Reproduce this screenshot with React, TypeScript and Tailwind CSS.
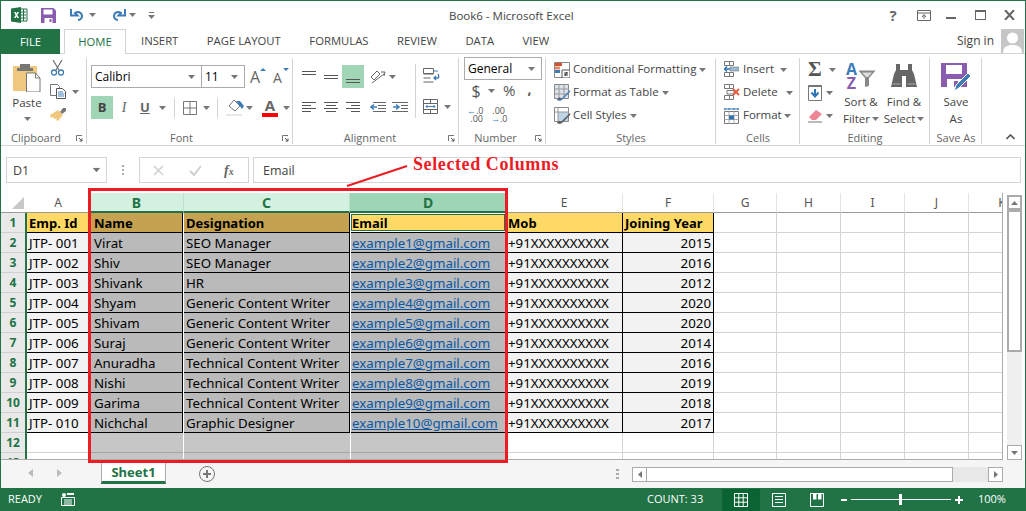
import React from "react";

const Caret = ({ className = "" }: { className?: string }) => (
  <svg width="7" height="4" viewBox="0 0 7 4" className={`shrink-0 ${className}`}><path d="M0 0h7L3.500 4z" fill="#777" /></svg>
);

const ExcelLogo = () => (
  <svg width="17" height="16" viewBox="0 0 17 16">
    <path d="M9 2h7v12H9z" fill="#fff" stroke="#217346" />
    <path d="M10 5h5M10 8h5M10 11h5M12.500 2v12" stroke="#217346" />
    <path d="M0 1.500 10 0v16L0 14.500z" fill="#217346" />
    <path d="M3 5h1.800L5.400 6.800 6.200 5H8L6.300 8 8 11H6.200L5.400 9.200 4.600 11H3L4.600 8z" fill="#fff" />
  </svg>
);
const SaveIcon = ({ s = 15 }: { s?: number }) => (
  <svg width={s} height={s} viewBox="0 0 15 15">
    <path d="M0 0h12.500L15 2.500V15H0z" fill="#8a5cb0" />
    <path d="M2.500 1.500h9v5h-9z" fill="#fff" />
    <path d="M3.500 10h8v5h-8z" fill="#fff" />
    <path d="M8.500 11h2v3h-2z" fill="#8a5cb0" />
  </svg>
);
const Undo = ({ flip = false }: { flip?: boolean }) => (
  <svg width="16" height="13" viewBox="0 0 16 13" style={flip ? { transform: "scaleX(-1)" } : undefined}>
    <path d="M1 0v6.500h6.500L5 4c2.500-2 6.500-.8 7 2.500.3 2.500-1.500 4.300-4 4.500" fill="none" stroke="#3e7cb8" strokeWidth="2" />
  </svg>
);
const Lines = ({ kind }: { kind: "top" | "mid" | "bot" | "left" | "center" | "right" }) => {
  const d: Record<string, string> = {
    top: "M0 .5h14M0 3.500h14",
    mid: "M0 4.500h14M0 7.500h14",
    bot: "M0 8.500h14M0 11.500h14",
    left: "M0 .5h14M0 3.500h9M0 6.500h14M0 9.500h9",
    center: "M0 .5h14M2 3.500h10M0 6.500h14M2 9.500h10",
    right: "M0 .5h14M5 3.500h9M0 6.500h14M5 9.500h9",
  };
  return <svg width="14" height="12" viewBox="0 0 14 12"><path d={d[kind]} stroke="#555" fill="none" /></svg>;
};
const Launcher = () => (
  <svg width="7" height="7" viewBox="0 0 7 7" className="shrink-0"><path d="M.5 6V.5H6" stroke="#777" fill="none" /><path d="M3 3l3 3M6 3.500V6H3.500" stroke="#555" fill="none" /></svg>
);

const Group = ({ w, label, launcher, children, labelClass = "" }: { w: string; label: string; launcher?: boolean; children: React.ReactNode; labelClass?: string }) => (
  <div className={`${w} shrink-0 flex flex-col relative`}>
    <div className="h-[74px] flex shrink-0">{children}</div>
    <div className="flex items-center h-[14px] text-[11px] text-[#666] leading-none">
      <span className={`flex-1 text-center pb-[2px] ${labelClass}`}>{label}</span>
      {launcher && <span className="mr-[4px] flex"><Launcher /></span>}
    </div>
    <div className="absolute right-0 top-0 bottom-0 w-px bg-[#d4d4d4]" />
  </div>
);

const Row3 = ({ icon, text, caretGap = "ml-[3px]" }: { icon: React.ReactNode; text: string; caretGap?: string }) => (
  <div className="h-[23px] flex items-center">
    <span className="w-[19px] flex">{icon}</span>
    <span className="text-[11.500px] text-[#444] whitespace-nowrap pb-[2px]">{text}</span>
    <Caret className={caretGap} />
  </div>
);

const CondIcon = () => (
  <svg width="16" height="16" viewBox="0 0 16 16">
    <path d="M.5.500h15v15H.5z" fill="#fff" stroke="#888" />
    <path d="M1 1h7v3H1z" fill="#d2542f" /><path d="M1 4.500h5v3H1z" fill="#e58a6a" /><path d="M1 8h5v3H1z" fill="#3e7cb8" />
    <path d="M8 8h8v8H8z" fill="#fff" stroke="#555" />
    <path d="M10 11h4M10 13h4M13 10l-2 4" stroke="#333" fill="none" />
  </svg>
);
const TableIcon = () => (
  <svg width="17" height="17" viewBox="0 0 17 17">
    <path d="M.5.500h14v14H.5z" fill="#dde3ec" stroke="#888" />
    <path d="M5 .5v14M10 .5v14M.5 5h14M.5 10h14" stroke="#999" />
    <path d="M3 16c1-2 3-2 4-1l8-8c1-1 2 0 1 1l-8 8c-1 1-4 1-5 0z" fill="#4d7fb5" />
    <path d="M3 16l3-3 1 2z" fill="#555" />
  </svg>
);
const StyleIcon = () => (
  <svg width="17" height="17" viewBox="0 0 17 17">
    <path d="M.5.500h14v14H.5z" fill="#fff" stroke="#888" />
    <path d="M4 5h10v9H4z" fill="#bfd3e6" />
    <path d="M4 .5v14M.5 5h14" stroke="#999" />
    <path d="M3 16c1-2 3-2 4-1l8-8c1-1 2 0 1 1l-8 8c-1 1-4 1-5 0z" fill="#555" />
  </svg>
);
const CellIns = () => (
  <svg width="15" height="17" viewBox="0 0 15 17"><path d="M.5.500h5v4h-5zM5.500.5h4v4h-4zM.5 11.500h5v4h-5zM5.500 11.500h4v4h-4z" fill="#fff" stroke="#777" /><path d="M6 6h9v4H6z" fill="#9db8d4" stroke="#777" strokeWidth=".6" /><path d="M0 8h6M3 5.500 .5 8 3 10.500" stroke="#2e75b6" strokeWidth="1.500" fill="none" /></svg>
);
const CellDel = () => (
  <svg width="16" height="17" viewBox="0 0 16 17"><path d="M.5.500h5v4h-5zM5.500.5h4v4h-4zM.5 11.500h5v4h-5zM5.500 11.500h4v4h-4zM3 6.500h7v3.500H3z" fill="#fff" stroke="#777" /><path d="M9 5l6 6M15 5l-6 6" stroke="#e0593a" strokeWidth="1.800" /></svg>
);
const CellFmt = () => (
  <svg width="15" height="16" viewBox="0 0 15 16"><path d="M.5 3.500h14v12H.5z" fill="#fff" stroke="#777" /><path d="M.5 7.500h14M.5 11.500h14M5 3.500v12M10 3.500v12" stroke="#aaa" /><path d="M5 7.500h5v4H5z" fill="#2e75b6" /><path d="M0 1h15" stroke="#2e75b6" /><path d="M1 0v2M14 0v2M5 0v2M10 0v2" stroke="#2e75b6" /></svg>
);

const TitleBar = () => (
  <div className="h-[28px] flex items-center relative shrink-0">
    <span className="ml-[10px] flex"><ExcelLogo /></span>
    <span className="ml-[13px] flex"><SaveIcon /></span>
    <span className="ml-[14px] flex"><Undo /></span>
    <Caret className="ml-[3px]" />
    <span className="ml-[14px] flex"><Undo flip /></span>
    <Caret className="ml-[3px]" />
    <span className="ml-[12px] flex flex-col gap-[2px] items-center">
      <span className="w-[5px] h-px bg-[#777]" />
      <Caret />
    </span>
    <span className="absolute left-[448px] top-[7px] text-[11.500px] leading-[16px] text-[#444] whitespace-nowrap">Book6 - Microsoft Excel</span>
    <div className="ml-auto flex items-center text-[#666]">
      <span className="text-[15px] font-bold w-[12px] text-center leading-none">?</span>
      <span className="ml-[18px] flex">
        <svg width="14" height="11" viewBox="0 0 14 11"><path d="M.5.500h13v10H.5zM.5 3h13" stroke="#666" fill="none" /><path d="M7 9V5M5 7l2-2.500L9 7" stroke="#666" fill="none" /></svg>
      </span>
      <span className="ml-[15px] w-[10px] h-[2px] bg-[#666] mt-[5px]" />
      <span className="ml-[19px] w-[11px] h-[10px] border border-[#666] border-t-[2px]" />
      <span className="ml-[18px] mr-[10px] flex">
        <svg width="11" height="10" viewBox="0 0 11 10"><path d="M1 0l9 10M10 0 1 10" stroke="#666" strokeWidth="2" /></svg>
      </span>
    </div>
  </div>
);

const Tabs = () => (
  <div className="h-[25px] flex relative shrink-0 border-b border-[#d4d4d4] text-[11.300px] text-[#444] leading-none">
    <div className="w-[59px] h-[25px] bg-[#217346] text-white flex items-center justify-center">FILE</div>
    <div className="ml-[4px] w-[62px] h-[25px] bg-white border-x border-t border-[#d4d4d4] text-[#217346] flex items-center justify-center">HOME</div>
    <div className="ml-[15px] flex items-center h-[24px] gap-[28.500px] whitespace-nowrap">
      <span>INSERT</span><span>PAGE LAYOUT</span><span>FORMULAS</span><span>REVIEW</span><span>DATA</span><span>VIEW</span>
    </div>
    <div className="ml-auto flex items-center h-[24px]">
      <span className="text-[12px]">Sign in</span>
      <div className="ml-[7px] mr-[1px] w-[23px] h-[24px] bg-[#c6c6c6] overflow-hidden flex">
        <svg width="23" height="24" viewBox="0 0 23 24"><circle cx="11.500" cy="9" r="5.500" fill="#fff" /><path d="M2 24c0-6 4-8 9.500-8S21 18 21 24z" fill="#fff" /></svg>
      </div>
    </div>
  </div>
);

const Ribbon = () => (
  <div className="h-[92px] flex shrink-0 pt-[4px] pb-[1px] border-b border-[#d4d4d4] relative">
    <Group w="w-[86px]" label="Clipboard" launcher labelClass="pr-[5px]">
      <div className="ml-[7px] w-[38px] flex flex-col items-center">
        <span className="mt-[4px] flex">
          <svg width="30" height="30" viewBox="0 0 30 30">
            <path d="M1 4h24v25H1z" fill="#efc87e" />
            <path d="M8 2h10v4h3v3H5V6h3z" fill="#777" />
            <path d="M14.500 11h9l4.500 5v14H14.500z" fill="#fff" stroke="#777" />
            <path d="M23.500 11v5H28" fill="none" stroke="#777" />
          </svg>
        </span>
        <span className="mt-[3px] text-[11.500px] text-[#444] leading-[16px]">Paste</span>
        <Caret className="mt-[6px]" />
      </div>
      <div className="ml-[4px] flex flex-col">
        <span className="mt-[2px] flex">
          <svg width="15" height="16" viewBox="0 0 15 16"><path d="M3 0l6 10M12 0 6 10" stroke="#777" strokeWidth="1.300" fill="none" /><circle cx="4" cy="12.500" r="2.500" fill="none" stroke="#3e7cb8" strokeWidth="1.300" /><circle cx="11" cy="12.500" r="2.500" fill="none" stroke="#3e7cb8" strokeWidth="1.300" /></svg>
        </span>
        <span className="mt-[8px] flex items-center">
          <svg width="16" height="15" viewBox="0 0 16 15"><path d="M.5.500h7l2 2v9h-9z" fill="#fff" stroke="#777" /><path d="M6.500 4.500h6l3 3v7h-9z" fill="#fff" stroke="#555" /><path d="M8 8h5M8 10h6M8 12h6" stroke="#3e7cb8" /></svg>
          <Caret className="ml-[6px]" />
        </span>
        <span className="mt-[8px] flex">
          <svg width="17" height="15" viewBox="0 0 17 15"><path d="M10 5l3-4h3v3l-4 3z" fill="#777" /><path d="M0 8l8-5 5 5-5 6-2-1 1-2-3 1-1-2-2 1z" fill="#efc87e" /></svg>
        </span>
      </div>
    </Group>
    <Group w="w-[206px]" label="Font" launcher labelClass="pr-[6px]">
      <div className="ml-[4px] flex flex-col">
        <div className="mt-[7px] flex items-center">
          <div className="w-[111px] h-[23px] border border-[#ababab] flex items-center pl-[3px] pr-[6px] text-[12px] text-black">
            <span className="flex-1">Calibri</span><Caret />
          </div>
          <div className="w-[43px] h-[23px] border border-[#ababab] border-l-0 flex items-center pl-[3px] pr-[6px] text-[12px] text-black">
            <span className="flex-1">11</span><Caret />
          </div>
          <span className="ml-[5px] relative flex w-[16px] items-end">
            <span className="text-[16px] leading-none text-[#666]">A</span>
            <svg width="6" height="3" viewBox="0 0 6 3" className="absolute right-0 top-[-1px]"><path d="M0 3h6L3 0z" fill="#3e7cb8" /></svg>
          </span>
          <span className="ml-[7px] relative flex w-[16px] items-end">
            <span className="text-[14px] leading-none text-[#666] mt-[2px]">A</span>
            <svg width="6" height="3" viewBox="0 0 6 3" className="absolute right-0 top-[-1px]"><path d="M0 0h6L3 3z" fill="#3e7cb8" /></svg>
          </span>
        </div>
        <div className="mt-[8px] flex items-center h-[23px] text-[#666]">
          <span className="w-[22px] h-[23px] bg-[#a0d5b5] flex items-center justify-center text-[13px] font-bold text-[#444]">B</span>
          <span className="ml-[3px] w-[16px] text-center text-[14px] italic font-['Liberation_Serif',serif]">I</span>
          <span className="ml-[8px] text-[13px] font-bold underline leading-none w-[10px]">U</span>
          <Caret className="ml-[9px]" />
          <span className="ml-[8px] w-px h-[20px] bg-[#d4d4d4]" />
          <span className="ml-[8px] flex">
            <svg width="14" height="14" viewBox="0 0 14 14"><path d="M.5.500h13v13H.5zM7 .5v13M.5 7h13" stroke="#777" fill="none" /></svg>
          </span>
          <Caret className="ml-[6px]" />
          <span className="ml-[7px] w-px h-[20px] bg-[#d4d4d4]" />
          <span className="ml-[8px] flex flex-col">
            <svg width="18" height="17" viewBox="0 0 18 17"><path d="M3 7l5-6 6 6-5 5z" fill="#fff" stroke="#777" /><path d="M10 2h4l4 5-2 3-3-4z" fill="#3e7cb8" /><path d="M0 15h16v2H0z" fill="#e8e8e8" /></svg>
          </span>
          <Caret className="ml-[2px]" />
          <span className="ml-[9px] flex flex-col items-center w-[16px]">
            <span className="text-[15px] leading-[12px] font-bold text-[#666]">A</span>
            <span className="mt-[2px] w-[16px] h-[4px] bg-[#f00]" />
          </span>
          <Caret className="ml-[5px]" />
        </div>
      </div>
    </Group>
    <Group w="w-[166px]" label="Alignment" launcher labelClass="pr-[1px]">
      <div className="ml-[9px] flex flex-col">
        <div className="mt-[7px] h-[23px] flex items-center">
          <span className="w-[22px] flex"><Lines kind="top" /></span>
          <span className="w-[18px] flex"><Lines kind="mid" /></span>
          <span className="w-[22px] h-[23px] bg-[#a0d5b5] flex items-center justify-center"><Lines kind="bot" /></span>
          <span className="ml-[6px] flex">
            <svg width="16" height="15" viewBox="0 0 16 15"><path d="M1 8l6-6 3 3-6 6z" fill="none" stroke="#666" /><path d="M2 14 14 5" stroke="#666" /><path d="M11 3l4 0-1 4" stroke="#666" fill="none" /></svg>
          </span>
          <Caret className="ml-[3px]" />
        </div>
        <div className="mt-[8px] h-[23px] flex items-center">
          <span className="w-[22px] flex"><Lines kind="left" /></span>
          <span className="w-[22px] flex"><Lines kind="center" /></span>
          <span className="w-[24px] flex"><Lines kind="right" /></span>
          <span className="w-[22px] flex">
            <svg width="16" height="12" viewBox="0 0 16 12"><path d="M3 .5h13M8 3.500h8M8 6.500h8M3 9.500h13" stroke="#666" /><path d="M7 5H1M4 2.500 1 5l3 2.500" stroke="#3e7cb8" strokeWidth="1.500" fill="none" /></svg>
          </span>
          <span className="flex">
            <svg width="16" height="12" viewBox="0 0 16 12"><path d="M0 .5h16M9 3.500h7M9 6.500h7M0 9.500h16" stroke="#666" /><path d="M1 5h6M4 2.500 7 5 4 7.500" stroke="#3e7cb8" strokeWidth="1.500" fill="none" /></svg>
          </span>
        </div>
      </div>
      <span className="ml-[7px] w-px h-[54px] mt-[6px] bg-[#d4d4d4]" />
      <div className="ml-[7px] flex flex-col">
        <span className="mt-[10px] flex">
          <svg width="17" height="16" viewBox="0 0 17 16"><path d="M.5.500h10v5H.5zM.5 6h10M.5 10h7M.5 14h10" stroke="#666" fill="none" /><path d="M10 3h5" stroke="#3e7cb8" /><path d="M11 10h4c1 0 1-2 0-4M13 8l-2 2 2 2" stroke="#3e7cb8" strokeWidth="1.300" fill="none" /></svg>
        </span>
        <span className="mt-[15px] flex items-center">
          <svg width="15" height="15" viewBox="0 0 15 15"><path d="M.5.500h14v14H.5zM.5 4.500h14M.5 10.500h14M7.500.5v4M7.500 10.500v4" stroke="#666" fill="none" /><path d="M3 7.500h9M4.500 6 3 7.500 4.500 9M10.500 6 12 7.500 10.500 9" stroke="#3e7cb8" fill="none" /></svg>
          <Caret className="ml-[6px]" />
        </span>
      </div>
    </Group>
    <Group w="w-[87px]" label="Number" launcher labelClass="pr-[3px]">
      <div className="ml-[5px] flex flex-col text-[#555]">
        <div className="mt-[-1px] w-[78px] h-[23px] border border-[#ababab] flex items-center pl-[3px] pr-[6px] text-[12px] text-black">
          <span className="flex-1">General</span><Caret />
        </div>
        <div className="mt-[1px] h-[19px] flex items-center text-[16px]">
          <span className="ml-[7px] w-[10px] text-center">$</span>
          <Caret className="ml-[7px]" />
          <span className="ml-[8px] text-[15px]">%</span>
          <span className="ml-[12px] text-[14px] font-bold leading-none mb-[4px]">,</span>
        </div>
        <div className="mt-[7px] flex items-center">
          <span className="ml-[3px] flex flex-col text-[9px] leading-[8px] w-[16px] text-right">
            <span><span className="text-[#3e7cb8]">←</span>.0</span><span>.00</span>
          </span>
          <span className="ml-[8px] flex flex-col text-[9px] leading-[8px] w-[14px] text-right">
            <span>.00</span><span><span className="text-[#3e7cb8]">→</span>.0</span>
          </span>
        </div>
      </div>
    </Group>
    <Group w="w-[170px]" label="Styles">
      <div className="ml-[8px] flex flex-col pt-0">
        <Row3 icon={<CondIcon />} text="Conditional Formatting" />
        <Row3 icon={<TableIcon />} text="Format as Table" />
        <Row3 icon={<StyleIcon />} text="Cell Styles" />
      </div>
    </Group>
    <Group w="w-[84px]" label="Cells">
      <div className="ml-[8px] flex flex-col">
        <Row3 icon={<CellIns />} text="Insert" caretGap="ml-[6px]" />
        <Row3 icon={<CellDel />} text="Delete" caretGap="ml-[8px]" />
        <Row3 icon={<CellFmt />} text="Format" caretGap="ml-[2px]" />
      </div>
    </Group>
    <Group w="w-[130px]" label="Editing">
      <div className="ml-[8px] w-[30px] flex flex-col">
        <div className="h-[23px] flex items-center">
          <span className="w-[16px] text-[21px] font-bold leading-none text-[#555] font-['Liberation_Serif',serif]">Σ</span>
          <Caret className="ml-[5px]" />
        </div>
        <div className="h-[23px] flex items-center">
          <svg width="15" height="17" viewBox="0 0 15 17"><path d="M.5 1.500h13v15H.5z" fill="#fff" stroke="#777" /><path d="M.5 1h13v2H.5z" fill="#777" /><path d="M7 5v7M3.500 8.500 7 12.500l3.500-4" stroke="#2e75b6" strokeWidth="2" fill="none" /></svg>
          <Caret className="ml-[3px]" />
        </div>
        <div className="h-[23px] flex items-center">
          <svg width="15" height="14" viewBox="0 0 15 14"><path d="M1 8l7-7 6 4-6 6H4z" fill="#ed8596" /><path d="M0 13h14" stroke="#777" /></svg>
          <Caret className="ml-[3px]" />
        </div>
      </div>
      <div className="ml-[4px] w-[38px] flex flex-col items-center text-[11.500px] text-[#444] leading-[16px]">
        <span className="flex mt-[4px] h-[32px]">
          <span className="flex flex-col items-center text-[16px] leading-[14px] font-bold mr-[1px]">
            <span className="text-[#3e7cb8]">A</span><span className="text-[#8a5cb0]">Z</span>
          </span>
          <svg width="18" height="18" viewBox="0 0 18 18" className="mt-[8px]"><path d="M.5.500h17L11 8v8l-4 1V8z" fill="#888" /><path d="M4 2.500h10L10 7H8z" fill="#ddd" /></svg>
        </span>
        <span className="whitespace-nowrap">Sort &amp;</span>
        <span className="whitespace-nowrap flex items-center mt-[1px]">Filter<Caret className="ml-[2px]" /></span>
      </div>
      <div className="ml-[3px] w-[42px] flex flex-col items-center text-[11.500px] text-[#444] leading-[16px]">
        <span className="flex mt-[6px] h-[30px]">
          <svg width="26" height="24" viewBox="0 0 26 24"><path d="M5 0h4v6h8V0h4v6l2 4 3 13H15V12h-4v11H0l3-13 2-4z" fill="#666" /><path d="M1.500 20h8M16.500 20h8" stroke="#aaa" /></svg>
        </span>
        <span className="whitespace-nowrap">Find &amp;</span>
        <span className="whitespace-nowrap flex items-center mt-[1px]">Select<Caret className="ml-[2px]" /></span>
      </div>
    </Group>
    <Group w="w-[52px]" label="Save As">
      <div className="w-full flex flex-col items-center text-[11.500px] text-[#444] leading-[16px]">
        <span className="flex mt-[4px] h-[32px] relative">
          <svg width="30" height="30" viewBox="0 0 30 30">
            <path d="M0 1h26v24H0z" fill="#8a5cb0" />
            <path d="M5 3h16v9H5zM6 17h14v8H6z" fill="#fff" />
            <path d="M13 19h4v6h-4z" fill="#8a5cb0" />
            <path d="M13 29l2-6 12-12 3 3-12 12z" fill="#3e7cb8" stroke="#fff" />
          </svg>
        </span>
        <span>Save</span>
        <span className="mt-[1px]">As</span>
      </div>
    </Group>
    <div className="flex-1 relative">
      <svg width="9" height="6" viewBox="0 0 9 6" className="absolute right-[10px] bottom-[4px]"><path d="M.5 5 4.500 1l4 4" stroke="#555" strokeWidth="1.600" fill="none" /></svg>
    </div>
  </div>
);

const FormulaBar = () => (
  <div className="h-[26px] flex shrink-0 text-[12.500px] text-[#444]">
    <div className="ml-[5px] w-[101px] border border-[#d4d4d4] flex items-center pl-[6px] pr-[6px]">
      <span className="flex-1 pt-[2px]">D1</span><Caret className="scale-110" />
    </div>
    <span className="ml-[13px] flex flex-col gap-[2px] justify-center w-[6px] items-center">
      <span className="w-[2px] h-[2px] bg-[#aaa]" /><span className="w-[2px] h-[2px] bg-[#aaa]" /><span className="w-[2px] h-[2px] bg-[#aaa]" />
    </span>
    <div className="ml-[13px] w-[110px] border border-[#d4d4d4] flex items-center">
      <span className="ml-[13px] flex">
        <svg width="11" height="11" viewBox="0 0 11 11"><path d="M1 1l9 9M10 1l-9 9" stroke="#d0d0d0" strokeWidth="1.600" /></svg>
      </span>
      <span className="ml-[25px] flex">
        <svg width="13" height="11" viewBox="0 0 13 11"><path d="M1 6l4 4 7-9" stroke="#d0d0d0" strokeWidth="2" fill="none" /></svg>
      </span>
      <span className="ml-[22px] font-['Liberation_Serif',serif] italic font-bold text-[14px] text-[#666]">f<span className="text-[10px]">x</span></span>
    </div>
    <div className="ml-[4px] w-[768px] border border-[#d4d4d4] flex items-center pl-[9px] pt-[2px]">Email</div>
  </div>
);

type R = [string, string, string, string, string, string];
const data: R[] = [
  ["JTP- 001", "Virat", "SEO Manager", "example1@gmail.com", "+91XXXXXXXXXX", "2015"],
  ["JTP- 002", "Shiv", "SEO Manager", "example2@gmail.com", "+91XXXXXXXXXX", "2016"],
  ["JTP- 003", "Shivank", "HR", "example3@gmail.com", "+91XXXXXXXXXX", "2012"],
  ["JTP- 004", "Shyam", "Generic Content Writer", "example4@gmail.com", "+91XXXXXXXXXX", "2020"],
  ["JTP- 005", "Shivam", "Generic Content Writer", "example5@gmail.com", "+91XXXXXXXXXX", "2020"],
  ["JTP- 006", "Suraj", "Generic Content Writer", "example6@gmail.com", "+91XXXXXXXXXX", "2014"],
  ["JTP- 007", "Anuradha", "Technical Content Writer", "example7@gmail.com", "+91XXXXXXXXXX", "2016"],
  ["JTP- 008", "Nishi", "Technical Content Writer", "example8@gmail.com", "+91XXXXXXXXXX", "2019"],
  ["JTP- 009", "Garima", "Technical Content Writer", "example9@gmail.com", "+91XXXXXXXXXX", "2018"],
  ["JTP- 010", "Nichchal", "Graphic Designer", "example10@gmail.com", "+91XXXXXXXXXX", "2017"],
];

const ColHead = ({ w, label, tone }: { w: string; label: string; tone?: "sel" | "active" }) => (
  <div className={`${w} h-[20px] shrink-0 flex items-center justify-center ${tone === "sel" ? "text-[14px] bg-[#d3f0e0] text-[#217346] font-bold border-r border-[#c1dfce] border-b-2 border-b-[#217346]" : tone === "active" ? "text-[14px] bg-[#9fd5b7] text-[#217346] font-bold border-b-2 border-b-[#217346]" : "text-[12px] bg-white text-[#555] border-r border-[#e4e4e4] border-b border-b-[#9a9a9a]"}`}>
    {label}
  </div>
);

const RowHead = ({ n }: { n: number }) => (
  <div className="w-[26px] shrink-0 h-full flex">
    <div className="w-[24px] bg-[#e9e9e9] border-b border-[#d0d0d0] text-[#217346] font-bold text-[12px] pt-px flex items-center justify-center">{n}</div>
    <div className="w-[2px] bg-[#217346]" />
  </div>
);

const Blanks = () => (
  <>
    <div className="w-[63px] shrink-0 border-r border-b border-[#d4d4d4]" />
    <div className="w-[64px] shrink-0 border-r border-b border-[#d4d4d4]" />
    <div className="w-[64px] shrink-0 border-r border-b border-[#d4d4d4]" />
    <div className="w-[64px] shrink-0 border-r border-b border-[#d4d4d4]" />
    <div className="w-[34px] shrink-0 border-b border-[#d4d4d4]" />
  </>
);

const cell = "shrink-0 border-r border-b border-black leading-[21px] whitespace-nowrap overflow-hidden";

const HeaderRow = () => (
  <div className="flex h-[20px] font-bold">
    <RowHead n={1} />
    <div className={`${cell} pl-[2px] w-[63px] bg-[#ffd966]`}>Emp. Id</div>
    <div className={`${cell} pl-[4px] w-[93px] bg-[#c4a24f]`}>Name</div>
    <div className="w-px bg-white shrink-0" />
    <div className={`${cell} pl-[2px] w-[166px] bg-[#c4a24f]`}>Designation</div>
    <div className="w-px bg-white shrink-0" />
    <div className="w-[155px] shrink-0 bg-white border-b border-black pt-px pb-px pr-px">
      <div className="h-full border border-[#217346] bg-[#ffd966] leading-[16px]">Email</div>
    </div>
    <div className={`${cell} pl-[2px] w-[117px] bg-[#ffd966]`}>Mob</div>
    <div className={`${cell} pl-[2px] w-[91px] bg-[#ffd966]`}>Joining Year</div>
    <Blanks />
  </div>
);

const Sheet = () => (
  <div className="w-[1002px] h-[267px] overflow-hidden border-r border-b border-[#ababab] font-['Noto_Sans',sans-serif] text-[13px] text-black">
    <div className="flex h-[20px]">
      <div className="w-[26px] h-[20px] shrink-0 bg-white flex items-end justify-end pr-[3px] pb-[3px] border-b border-[#9a9a9a]">
        <svg width="12" height="12" viewBox="0 0 12 12"><path d="M12 0v12H0z" fill="#c8c8c8" /></svg>
      </div>
      <ColHead w="w-[63px]" label="A" />
      <ColHead w="w-[94px]" label="B" tone="sel" />
      <ColHead w="w-[166px]" label="C" tone="sel" />
      <ColHead w="w-[156px]" label="D" tone="active" />
      <ColHead w="w-[117px]" label="E" />
      <ColHead w="w-[91px]" label="F" />
      <ColHead w="w-[63px]" label="G" />
      <ColHead w="w-[64px]" label="H" />
      <ColHead w="w-[64px]" label="I" />
      <ColHead w="w-[64px]" label="J" />
      <div className="w-[34px] h-[20px] shrink-0 overflow-hidden bg-white border-b border-[#9a9a9a]">
        <div className="w-[64px] h-full flex items-center justify-center text-[12px] text-[#555] pl-[2px]">K</div>
      </div>
    </div>
    <HeaderRow />
    {data.map((r, i) => (
      <div key={r[0]} className="flex h-[20px] text-[13.300px]">
        <RowHead n={i + 2} />
        <div className={`${cell} pl-[2px] w-[63px] bg-[#f2f2f2]`}>{r[0]}</div>
        <div className={`${cell} pl-[4px] w-[93px] bg-[#bababa]`}>{r[1]}</div>
        <div className="w-px bg-white shrink-0" />
        <div className={`${cell} pl-[2px] w-[166px] bg-[#bababa]`}>{r[2]}</div>
        <div className="w-px bg-white shrink-0" />
        <div className={`${cell} pl-[1px] w-[155px] bg-[#bababa] text-[#0b57a4] underline`}>{r[3]}</div>
        <div className={`${cell} pl-[2px] w-[117px] bg-[#f2f2f2]`}>{r[4]}</div>
        <div className={`${cell} pr-[2px] w-[91px] bg-[#f2f2f2] text-right`}>{r[5]}</div>
        <Blanks />
      </div>
    ))}
    {[12, 13].map((n) => (
      <div key={n} className="flex h-[20px]">
        <RowHead n={n} />
        <div className="w-[63px] shrink-0 border-r border-b border-[#d4d4d4]" />
        <div className="w-[93px] shrink-0 bg-[#c6c6c6] border-b border-[#a5a5a5]" />
        <div className="w-px bg-white shrink-0" />
        <div className="w-[166px] shrink-0 bg-[#c6c6c6] border-b border-[#a5a5a5]" />
        <div className="w-px bg-white shrink-0" />
        <div className="w-[155px] shrink-0 bg-[#c6c6c6] border-b border-[#a5a5a5]" />
        <div className="w-[117px] shrink-0 border-r border-b border-[#d4d4d4]" />
        <div className="w-[91px] shrink-0 border-r border-b border-[#d4d4d4]" />
        <Blanks />
      </div>
    ))}
  </div>
);

const VScroll = () => (
  <div className="w-[22px] h-[267px] shrink-0 bg-white flex flex-col items-center">
    <div className="mt-[2px] ml-[1px] w-[15px] h-[15px] border-2 border-[#ababab] flex items-center justify-center bg-white">
      <svg width="7" height="4" viewBox="0 0 7 4"><path d="M0 4h7L3.500 0z" fill="#777" /></svg>
    </div>
    <div className="ml-[1px] w-[15px] h-[142px] border-2 border-[#ababab] bg-white" />
    <div className="ml-[1px] w-[15px] flex-1 bg-[#f0f0f0]" />
    <div className="ml-[1px] w-[15px] h-[15px] border border-[#ababab] flex items-center justify-center bg-white">
      <svg width="7" height="4" viewBox="0 0 7 4"><path d="M0 0h7L3.500 4z" fill="#777" /></svg>
    </div>
  </div>
);

const SheetTabs = () => (
  <div className="h-[28px] bg-[#f5f5f5] flex shrink-0 items-start relative">
    <svg width="5" height="8" viewBox="0 0 5 8" className="ml-[27px] mt-[9px]"><path d="M5 0v8L0 4z" fill="#bbb" /></svg>
    <svg width="5" height="8" viewBox="0 0 5 8" className="ml-[24px] mt-[9px]"><path d="M0 0v8l5-4z" fill="#bbb" /></svg>
    <div className="ml-[39px] w-[65px] h-[24px] bg-white border-x border-[#ababab] border-b-[3px] border-b-[#217346] pt-[4px] text-[#217346] font-bold text-[13px] flex items-center justify-center font-['Noto_Sans',sans-serif]">Sheet1</div>
    <span className="ml-[33px] mt-[6px] w-[16px] h-[16px] rounded-full border border-[#777] flex items-center justify-center">
      <svg width="8" height="8" viewBox="0 0 8 8"><path d="M4 0v8M0 4h8" stroke="#777" strokeWidth="2" /></svg>
    </span>
    <span className="ml-[401px] mt-[9px] flex flex-col gap-[2px]">
      <span className="w-[3px] h-[2px] bg-[#aaa]" /><span className="w-[3px] h-[2px] bg-[#aaa]" /><span className="w-[3px] h-[2px] bg-[#aaa]" />
    </span>
    <div className="ml-[13px] mt-[7px] w-[371px] h-[15px] flex bg-[#e8e8e8]">
      <div className="w-[15px] h-[15px] border border-[#ababab] bg-white flex items-center justify-center">
        <svg width="4" height="7" viewBox="0 0 4 7"><path d="M4 0v7L0 3.500z" fill="#777" /></svg>
      </div>
      <div className="w-[306px] h-[15px] border border-[#ababab] border-l-0 bg-white" />
      <div className="flex-1" />
      <div className="w-[15px] h-[15px] border border-[#ababab] bg-white flex items-center justify-center">
        <svg width="4" height="7" viewBox="0 0 4 7"><path d="M0 0v7l4-3.500z" fill="#777" /></svg>
      </div>
    </div>
  </div>
);

const StatusBar = () => (
  <div className="h-[23px] bg-[#217346] text-white text-[11px] flex items-center shrink-0">
    <span className="ml-[7px] w-[33px]">READY</span>
    <span className="ml-[20px] flex">
      <svg width="14" height="13" viewBox="0 0 14 13"><path d="M.5 4.500h13v8H.5z" fill="none" stroke="#fff" /><path d="M3 7h8M3 9h8M3 11h8" stroke="#fff" /><circle cx="3" cy="2" r="2" fill="#fff" /><path d="M6 1h7" stroke="#fff" strokeWidth="2" /></svg>
    </span>
    <span className="ml-[572px] w-[58px] whitespace-nowrap">COUNT: 33</span>
    <span className="ml-[17px] w-[38px] h-[22px] mt-px bg-[#0a6332] flex items-center justify-center">
      <svg width="14" height="14" viewBox="0 0 14 14"><path d="M.5.500h13v13H.5zM4.800.5v13M9.200.5v13M.5 4.800h13M.5 9.200h13" stroke="#fff" fill="none" /></svg>
    </span>
    <span className="ml-[12px] flex">
      <svg width="14" height="14" viewBox="0 0 14 14"><path d="M.5.500h13v13H.5zM3 3.500h8M3 6.500h8M3 9.500h8" stroke="#fff" fill="none" /></svg>
    </span>
    <span className="ml-[24px] flex">
      <svg width="14" height="14" viewBox="0 0 14 14"><path d="M.5.500h13v13H.5z" stroke="#fff" fill="none" /><path d="M3 .5h3.500v6H3zM8 .5h3.500v6H8z" fill="#fff" /></svg>
    </span>
    <span className="ml-[17px] w-[6px] h-[2px] bg-white" />
    <span className="ml-[4px] w-[100px] h-[15px] relative flex items-center">
      <span className="w-full h-px bg-white" />
      <span className="absolute left-[48px] top-[2px] w-[3px] h-[11px] bg-white" />
    </span>
    <span className="ml-[4px] flex">
      <svg width="8" height="8" viewBox="0 0 8 8"><path d="M4 0v8M0 4h8" stroke="#fff" strokeWidth="2" /></svg>
    </span>
    <span className="ml-[15px] whitespace-nowrap">100%</span>
  </div>
);

export default function App() {
  return (
    <div className="relative w-[1026px] h-[511px] overflow-hidden bg-white border-t border-x border-[#217346] flex flex-col font-['Open_Sans',sans-serif]">
      <TitleBar />
      <Tabs />
      <Ribbon />
      <div className="h-[11px] shrink-0" />
      <FormulaBar />
      <div className="h-[10px] shrink-0" />
      <div className="flex h-[267px] shrink-0">
        <Sheet />
        <VScroll />
      </div>
      <SheetTabs />
      <StatusBar />

      <div className="absolute left-[87px] top-[187px] w-[420px] h-[275px] border-[3px] border-[#ed1c24]" />
      <svg width="64" height="24" viewBox="0 0 64 24" className="absolute left-[345px] top-[163px]">
        <path d="M1 22 61 2" stroke="#ed1c24" strokeWidth="2" />
      </svg>
      <span className="absolute left-[412px] top-[153px] font-['Liberation_Serif',serif] font-bold text-[18px] leading-[20px] tracking-[0.6px] text-[#ed1c24] whitespace-nowrap">Selected Columns</span>
    </div>
  );
}
